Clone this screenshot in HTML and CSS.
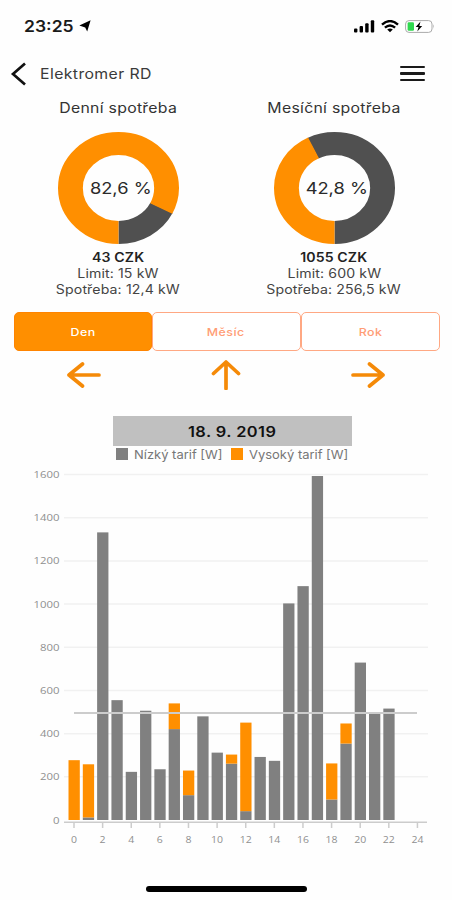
FILE: index.html
```html
<!DOCTYPE html>
<html lang="cs">
<head>
<meta charset="utf-8">
<title>Elektromer RD</title>
<link rel="stylesheet" href="styles.css">
</head>
<body>
<div class="screen">
  <div class="status">
    <div class="clock">
      <span class="time">23:25</span>
      <svg width="12" height="12" viewBox="0 0 12 12"><path d="M11.6 .3 8.200 11.500 6.200 7.400.3 5.600Z"/></svg>
    </div>
    <div class="indicators">
      <svg width="21" height="13" viewBox="0 0 21 13"><rect x="0" y="8.5" width="3.4" height="4" rx="1"/><rect x="5.6" y="6" width="3.4" height="6.5" rx="1"/><rect x="11.2" y="3.2" width="3.4" height="9.3" rx="1"/><rect x="16.8" y=".3" width="3.4" height="12.2" rx="1"/></svg>
      <svg class="wifi" width="18" height="13" viewBox="0 0 18 13"><path d="M1 4.6Q9-2.4 17 4.6M3.9 7.6q5.1-4.4 10.2 0"/><path class="fill" d="M6.2 9.6Q9 7.4 11.8 9.6L9 12.3Z"/></svg>
      <svg class="battery" width="30" height="13" viewBox="0 0 30 13"><rect class="case" x=".6" y=".6" width="26.4" height="11.8" rx="3.4"/><path class="cap" d="M28.2 4.3q1.8 2.2 0 4.4z"/><rect class="charge" x="2.6" y="2.3" width="6.4" height="8.4" rx="1.2"/><path d="M15.5 1.6 10.7 7h2.8l-1.2 4.4L17.2 6h-2.9z"/></svg>
    </div>
  </div>

  <header class="header">
    <svg class="back" width="18" height="24" viewBox="0 0 18 24"><path d="M15 1.500 3 12l12 10.500"/></svg>
    <h1 class="title">Elektromer RD</h1>
    <div class="menu"><i></i><i></i><i></i></div>
  </header>

  <section class="gauges">
    <div class="gauge">
      <h2 class="gauge-title">Denní spotřeba</h2>
      <div class="donut">
        <svg viewBox="0 0 122 112" preserveAspectRatio="none"><g transform="translate(61 56) scale(1.0893 1) rotate(90)"><circle class="rest" r="44.5" pathLength="100" stroke-dasharray="17.6 100" stroke-dashoffset="-82.4"/><circle class="used" r="44.5" pathLength="100" stroke-dasharray="82.6 100"/></g></svg>
        <span class="percent">82,6 %</span>
      </div>
      <p class="price">43 CZK</p>
      <p class="line">Limit: 15 kW</p>
      <p class="line">Spotřeba: 12,4 kW</p>
    </div>
    <div class="gauge">
      <h2 class="gauge-title">Mesíční spotřeba</h2>
      <div class="donut">
        <svg viewBox="0 0 122 112" preserveAspectRatio="none"><g transform="translate(61 56) scale(1.0893 1) rotate(90)"><circle class="rest" r="44.5" pathLength="100" stroke-dasharray="57.4 100" stroke-dashoffset="-42.6"/><circle class="used" r="44.5" pathLength="100" stroke-dasharray="42.8 100"/></g></svg>
        <span class="percent">42,8 %</span>
      </div>
      <p class="price">1055 CZK</p>
      <p class="line">Limit: 600 kW</p>
      <p class="line">Spotřeba: 256,5 kW</p>
    </div>
  </section>

  <nav class="tabs">
    <button class="tab active"><span>Den</span></button>
    <button class="tab"><span>Měsíc</span></button>
    <button class="tab"><span>Rok</span></button>
  </nav>

  <div class="arrows">
    <svg width="34" height="30" viewBox="0 0 34 30"><path d="M32 15H2M15.500 4 2 15l13.500 11"/></svg>
    <svg width="30" height="30" viewBox="0 0 30 30"><path d="M15 28.5V2M2.5 13.5 15 2l12.500 11.500"/></svg>
    <svg width="34" height="30" viewBox="0 0 34 30"><path d="M2 15h30M18.500 4 32 15 18.500 26"/></svg>
  </div>

  <div class="date"><span>18. 9. 2019</span></div>
  <div class="legend">
    <i class="swatch low"></i><span class="legend-label">Nízký tarif [W]</span>
    <i class="swatch high"></i><span class="legend-label">Vysoký tarif [W]</span>
  </div>
  <svg class="chart" id="chart" width="452" height="400" viewBox="0 462 452 400"></svg>
  <div class="home"></div>
</div>
<script src="chart.js"></script>
</body>
</html>
```
FILE: styles.css
```css
* { box-sizing: border-box; }
body { margin: 0; background: #fefefe; color: #333; font-family: Inter, "Liberation Sans", sans-serif; }
h1, h2, p { margin: 0; font-weight: 400; }
svg { display: block; flex: none; }
.screen { width: 452px; height: 900px; display: flex; flex-direction: column; overflow: hidden; }

/* The interface uses wide letterforms throughout. */
.time, .title, .gauge-title, .percent, .price, .line, .tab span, .date span { transform: scaleX(1.13); white-space: nowrap; }
.tab span, .date span { display: inline-block; }

.status { height: 52px; padding: 0 17px 0 24px; display: flex; align-items: center; justify-content: space-between; }
.clock { display: flex; align-items: center; gap: 6px; }
.time { width: 49px; transform-origin: left; font-size: 15.500px; font-weight: 600; color: #1a1a1a; }
.indicators { display: flex; align-items: center; gap: 6px; }
.wifi path { fill: none; stroke: #000; stroke-width: 2.4; }
.wifi .fill { fill: #000; stroke: none; }
.battery .case { fill: #fff; stroke: #aaa; stroke-width: 1; }
.battery .cap { fill: #aaa; }
.battery .charge { fill: #2fd84e; }

.header { height: 43px; padding: 0 27px 0 10px; display: flex; align-items: center; }
.back path { fill: none; stroke: #111; stroke-width: 2.7; }
.title { margin: 0 0 0 12px; transform-origin: left; font-size: 14px; letter-spacing: .35px; color: #3a3a3a; }
.menu { margin-left: auto; width: 25px; display: flex; flex-direction: column; gap: 4.500px; }
.menu i { height: 2.300px; border-radius: 1px; background: #1a1a1a; }

.gauges { height: 217px; padding: 3px 10px 0; display: flex; }
.gauge { width: 216.500px; display: flex; flex-direction: column; align-items: center; }
.gauge-title { height: 20px; line-height: 19px; font-size: 14px; letter-spacing: .25px; }
.donut { position: relative; width: 121px; height: 112px; margin: 14px 0 6px; }
.donut svg { width: 121px; height: 112px; }
.donut circle { fill: none; stroke-width: 23; }
.donut .rest { stroke: #505050; }
.donut .used { stroke: #ff8f00; }
.percent { position: absolute; inset: 0; padding-left: 4px; display: flex; align-items: center; justify-content: center; font-size: 16.200px; color: #2a2a2a; }
.price { height: 16px; line-height: 16px; font-size: 12.500px; font-weight: 600; letter-spacing: .1px; color: #222; }
.line { height: 16px; line-height: 16px; font-size: 12.500px; letter-spacing: .1px; color: #444; }

.tabs { height: 39px; margin: 0 12px 0 14px; display: grid; grid-template-columns: 137.500px 149.500px 138.500px; }
.tab { border: 1.500px solid #ffa883; border-radius: 5px; background: #fff; color: #ff9d75; font: 500 11px Inter, sans-serif; letter-spacing: .4px; padding: 0; }
.tab.active { background: #ff8f00; border-color: #ff8400; color: #fff; }

.arrows { height: 65px; margin: 0 67px; padding-top: 9px; display: flex; align-items: flex-start; justify-content: space-between; }
.arrows path { fill: none; stroke: #f58a08; stroke-width: 3.700px; stroke-linecap: round; stroke-linejoin: round; }

.date { width: 239px; height: 30px; margin-left: 113px; background: #c0c0c0; display: flex; align-items: center; justify-content: center; font-size: 14.500px; font-weight: 600; letter-spacing: .4px; color: #111; }
.legend { height: 16px; padding-left: 116px; display: flex; align-items: center; font-size: 12px; color: #777; white-space: nowrap; }
.swatch { width: 12px; height: 12px; margin-right: 6px; }
.swatch.low { background: #808080; }
.swatch.high { background: #ff8f00; }
.legend-label { width: 97px; transform: scaleX(1.08); transform-origin: left; }

.chart { font-family: "Open Sans", sans-serif; font-size: 9.500px; }
.chart .grid { stroke: #f1f1f1; stroke-width: 1.500px; }
.chart .axis { stroke: #ccc; stroke-width: 1.500px; }
.chart .average { stroke: #ccc; stroke-width: 2px; }
.chart .low { fill: #808080; }
.chart .high { fill: #ff8f00; }
.chart text { fill: #8f8f8f; }
.home { width: 161px; height: 5.500px; margin: 24px 0 0 146px; border-radius: 3px; background: #000; flex: none; }
```
FILE: chart.js
```
const tariffs = [
  [0, 277], [12, 246], [1332, 0], [555, 0], [223, 0], [506, 0], [235, 0], [421, 119],
  [115, 114], [480, 0], [312, 0], [261, 42], [41, 410], [292, 0], [274, 0], [1003, 0],
  [1083, 0], [1593, 0], [95, 167], [354, 93], [729, 0], [495, 0], [516, 0]
];
const baseY = 820;
const scale = 345.500 / 1600;
const xAt = hour => 74 + hour * 14.310;
const line = (cls, x1, y1, x2, y2) => `<line class="${cls}" x1="${x1}" y1="${y1}" x2="${x2}" y2="${y2}"/>`;
const bar = (cls, x, y, height) => height ? `<rect class="${cls}" x="${x}" y="${y}" width="11.3" height="${height}"/>` : '';
let out = '';
for (let value = 0; value <= 1600; value += 200) {
  const y = baseY - value * scale;
  if (value) out += line('grid', 64, y, 428, y);
  const label = String(value);
  out += `<text x="59.5" y="${y + 3.5}" text-anchor="end" textLength="${label.length * 6.5}" lengthAdjust="spacingAndGlyphs">${label}</text>`;
}
tariffs.forEach(([low, high], hour) => {
  const x = xAt(hour) - 5.500;
  const lowTop = baseY - low * scale;
  out += bar('low', x, lowTop, low * scale) + bar('high', x, lowTop - high * scale, high * scale);
});
out += line('axis', 64, 822.300, 427, 822.300) + line('average', 74, 713, 417, 713);
for (let hour = 0; hour <= 24; hour += 2) {
  const label = String(hour);
  out += line('axis', xAt(hour), 822.300, xAt(hour), 828);
  out += `<text x="${xAt(hour)}" y="843" text-anchor="middle" textLength="${label.length * 6}" lengthAdjust="spacingAndGlyphs">${label}</text>`;
}
document.getElementById('chart').innerHTML = out;
```
